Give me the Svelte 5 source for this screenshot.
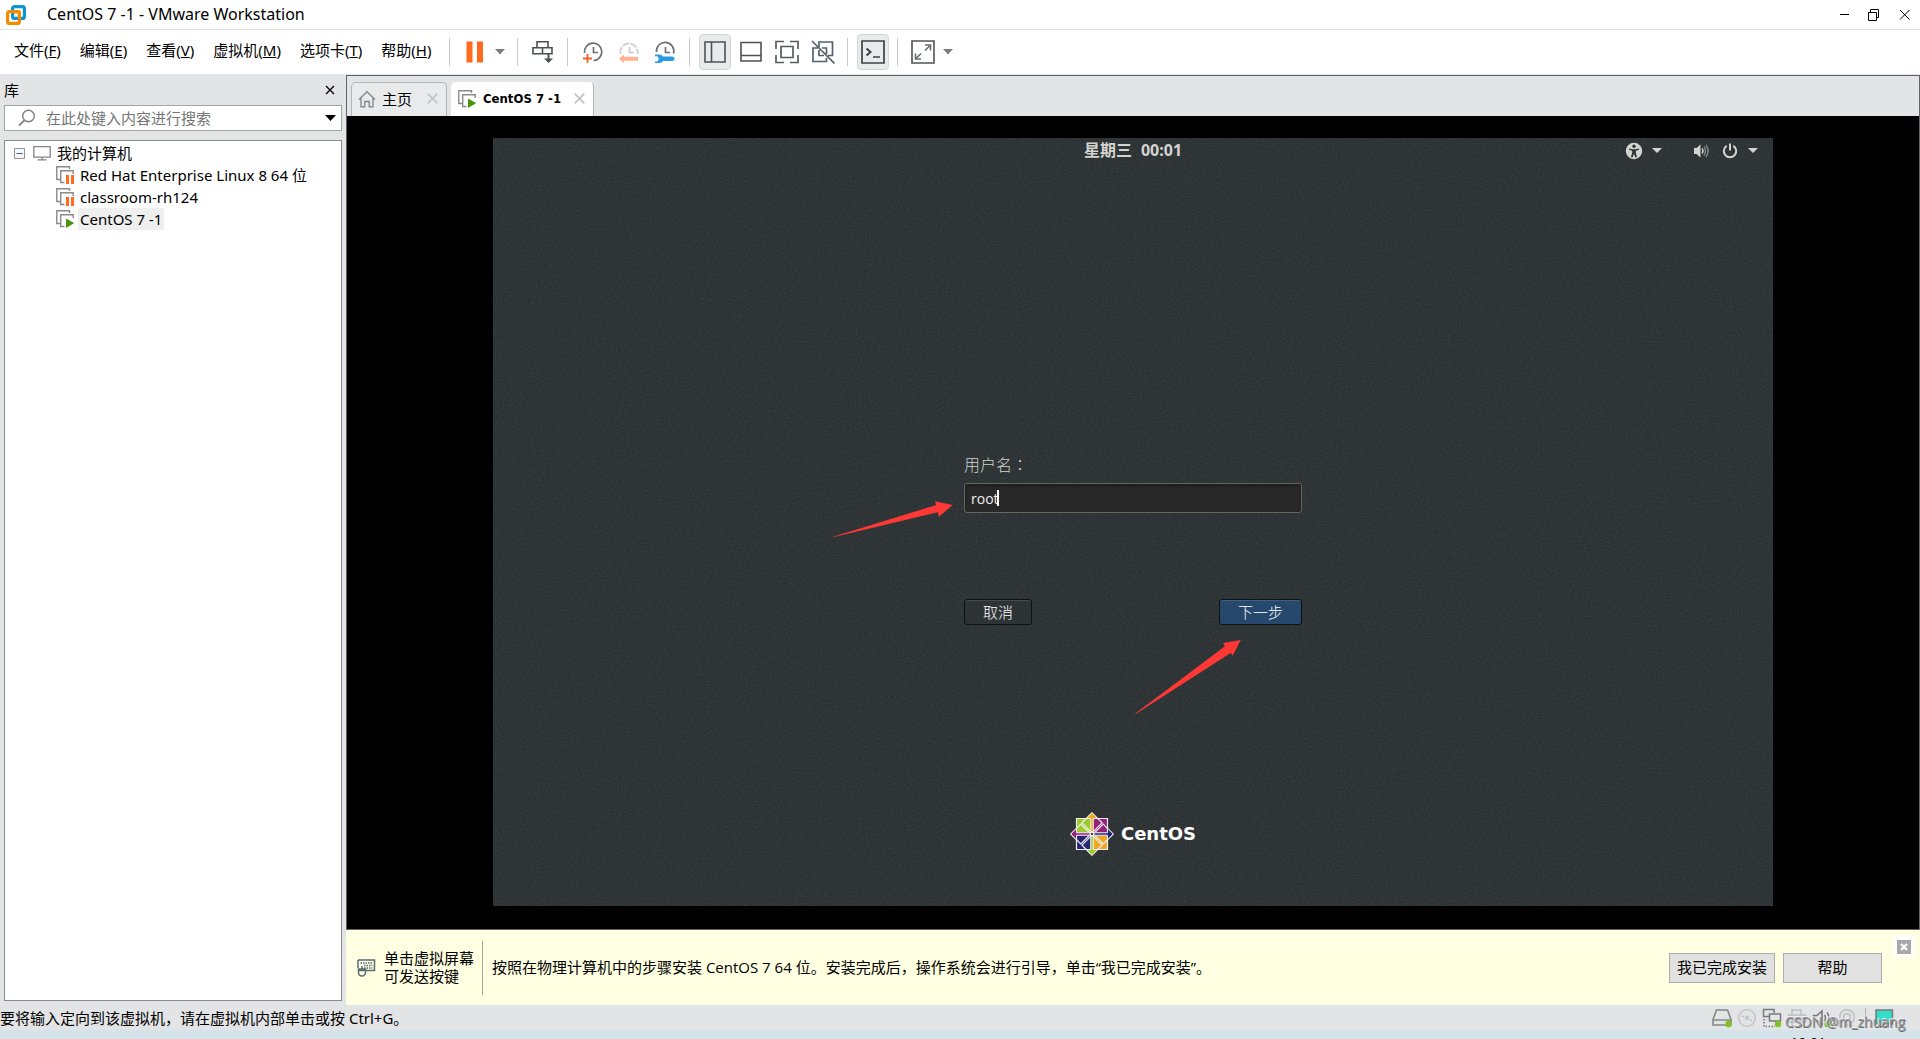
<script>
  const menus = [
    ['文件', 'F'],
    ['编辑', 'E'],
    ['查看', 'V'],
    ['虚拟机', 'M'],
    ['选项卡', 'T'],
    ['帮助', 'H']
  ];
  const machines = [
    { name: 'Red Hat Enterprise Linux 8 64 位', state: 'paused' },
    { name: 'classroom-rh124', state: 'paused' },
    { name: 'CentOS 7 -1', state: 'running', selected: true }
  ];
  let username = $state('root');
  let query = $state('');
</script>

{#snippet vm(state)}
  <svg class="i18" viewBox="0 0 18 18" fill="none">
    <path d="M4 13.5H.8V.8H13.500V3" stroke="#8a8a8a" stroke-width="1.400" />
    <path d="M8.500 16.500H4.700V4.700H17.200V8" stroke="#8a8a8a" stroke-width="1.400" />
    {#if state === 'paused'}
      <path d="M10 9h3v9h-3zM15 9h3v9h-3z" fill="#ff6a1f" />
    {:else}
      <path d="M10 8.500L18.200 13.200 10 18z" fill="#46960c" />
    {/if}
  </svg>
{/snippet}

{#snippet cross()}
  <svg class="i11" viewBox="0 0 11 11"><path d="M.7.7l9.600 9.600M10.300.7L.7 10.300" stroke="currentColor" stroke-width="1.700" /></svg>
{/snippet}

<div class="window">
  <header class="title">
    <svg class="applogo" viewBox="0 0 20 20" fill="none" stroke-width="3.200">
      <rect x="6.600" y="1.600" width="11.800" height="11.800" rx="2" stroke="#0f95d4" />
      <rect x="1.600" y="6.600" width="11.800" height="11.800" rx="2" stroke="#f38b00" />
      <path d="M6.600 9.500V12a1.500 1.500 0 0 0 1.500 1.400h3" stroke="#0f95d4" stroke-width="1.200" />
      <path d="M8.500 6.600H12a1.400 1.400 0 0 1 1.400 1.400v3.500" stroke="#f38b00" stroke-width="3.200" />
    </svg>
    <h1>CentOS 7 -1 - VMware Workstation</h1>
    <div class="winbtns">
      <button aria-label="最小化"><svg viewBox="0 0 12 12"><path d="M3 5.500h9" stroke="#000" /></svg></button>
      <button aria-label="还原"><svg viewBox="0 0 12 12" fill="none" stroke="#000"><path d="M.5 3.500h8v8h-8zM2.500 3V.5h8v8H9" /></svg></button>
      <button aria-label="关闭"><svg viewBox="0 0 12 12"><path d="M1 1l9.500 9.500M10.500 1L1 10.500" stroke="#000" /></svg></button>
    </div>
  </header>

  <div class="menubar">
    <nav>
      {#each menus as [label, key]}
        <button>{label}(<u>{key}</u>)</button>
      {/each}
    </nav>
    <div class="tools">
      <i class="sep"></i>
      <div class="split">
        <button class="tool" aria-label="暂停"><svg viewBox="0 0 24 24"><path d="M3.500 1.500h6v21h-6zM14 1.500h6v21h-6z" fill="#ff6a1f" /></svg></button>
        <button class="drop" aria-label="电源选项"><svg viewBox="0 0 10 6"><path d="M0 0h10L5 5.500z" fill="#7c7c7c" /></svg></button>
      </div>
      <i class="sep"></i>
      <button class="tool" aria-label="发送 Ctrl+Alt+Del">
        <svg viewBox="0 0 24 24" fill="none" stroke="#4d5053" stroke-width="1.600"><path d="M6 1.800h11v6H6zM2 7.800h9.500v6H2zM11.500 7.800h9.500v6h-9.500z" /><path d="M17.500 14v7" stroke-width="2" /><path d="M13 18.500h9l-4.500 4.500z" fill="#4d5053" stroke="none" /></svg>
      </button>
      <i class="sep"></i>
      <button class="tool" aria-label="拍摄快照">
        <svg viewBox="0 0 24 24" fill="none"><path d="M3.500 13A8.700 8.700 0 1 1 12.500 20.500" stroke="#6e7073" stroke-width="1.700" /><path d="M12.500 7v5.500H17" stroke="#6e7073" stroke-width="1.700" /><path d="M2 18.500h9M6.500 14v9" stroke="#f0622a" stroke-width="1.800" /></svg>
      </button>
      <button class="tool" aria-label="恢复快照">
        <svg viewBox="0 0 24 24" fill="none"><path d="M3.500 14A8.700 8.700 0 1 1 20.500 14" stroke="#c9cacb" stroke-width="1.700" stroke-dasharray="7 1.500" /><path d="M12.500 7v5.500H17" stroke="#c9cacb" stroke-width="1.700" /><path d="M2 18.700l5-4.200v2.200h14v4H7V23z" fill="#ffb08c" /></svg>
      </button>
      <button class="tool" aria-label="快照管理器">
        <svg viewBox="0 0 24 24" fill="none"><path d="M3.500 12A8.700 8.700 0 1 1 20.500 13.500" stroke="#6e7073" stroke-width="1.700" /><path d="M12.500 7v5.500H17" stroke="#6e7073" stroke-width="1.700" /><path d="M2 14.500h4.500c2 0 2.700 1 3.500 2h9c3.500 0 3.500 4.500 0 4.500h-9c-.8 1-1.500 2-3.500 2H2v-1.500h2.500l1.300-2.700-1.300-2.600H2z" fill="#2b9be0" /></svg>
      </button>
      <i class="sep"></i>
      <button class="tool on" aria-label="显示库"><svg viewBox="0 0 24 24" fill="none" stroke="#4f5254" stroke-width="1.600"><path d="M2 2h20v20H2zM8.500 2v20" /></svg></button>
      <button class="tool" aria-label="显示缩略图"><svg viewBox="0 0 24 24" fill="none" stroke="#4f5254" stroke-width="1.600"><path d="M2 2.500h20v18.500H2zM2 15.500h20" /></svg></button>
      <button class="tool" aria-label="全屏"><svg viewBox="0 0 24 24" fill="none" stroke="#5a5d60" stroke-width="1.700"><path d="M6 6.500h12v11H6zM1 9V1.500h8M15 1.500h8V9M1 15v7.500h8M15 22.500h8V15" /></svg></button>
      <button class="tool" aria-label="Unity"><svg viewBox="0 0 24 24" fill="none" stroke="#56626c" stroke-width="1.700"><path d="M8 7V2h13.500v13.500H17M8 10v5.500h5M15.500 14V8H11M7 8H2v13.500h13.500V18M1 1l22.500 22.500" /></svg></button>
      <i class="sep"></i>
      <button class="tool on" aria-label="控制台"><svg viewBox="0 0 24 24" fill="none" stroke="#3f4244" stroke-width="1.700"><path d="M1 1h22v22H1zM12 17h7" /><path d="M5.500 8.500l4 3.500-4 3.500" stroke-width="2" /></svg></button>
      <i class="sep"></i>
      <div class="split">
        <button class="tool" aria-label="拉伸"><svg viewBox="0 0 24 24" fill="none" stroke="#4f5254" stroke-width="1.600"><path d="M1 1h22v22H1z" /><path d="M14 5h5.500v5.500M19 5.500l-5 5M4.500 13.500V19H10M5 18.500l5-5" stroke="#6a6d70" /></svg></button>
        <button class="drop" aria-label="拉伸选项"><svg viewBox="0 0 10 6"><path d="M0 0h10L5 5.500z" fill="#7c7c7c" /></svg></button>
      </div>
    </div>
  </div>

  <div class="body">
    <aside>
      <div class="libhead">
        <span>库</span>
        <button aria-label="关闭库"><svg viewBox="0 0 10 10"><path d="M1 1l8 8M9 1L1 9" stroke="#000" stroke-width="1.300" /></svg></button>
      </div>
      <label class="search">
        <svg class="i18" viewBox="0 0 18 18" fill="none" stroke="#828282" stroke-width="1.400"><circle cx="10.500" cy="7" r="5.800" /><path d="M6.500 11.200L1 16.700" stroke-width="1.800" /></svg>
        <input placeholder="在此处键入内容进行搜索" bind:value={query} aria-label="搜索" />
        <svg class="arrow" viewBox="0 0 11 6"><path d="M0 0h11L5.500 6z" fill="#000" /></svg>
      </label>
      <div class="tree">
        <div class="row root">
          <svg class="i11" viewBox="0 0 11 11"><path d="M.5.5h10v10H.5z" fill="#f7f7f7" stroke="#8f9297" /><path d="M2.500 5.500h6" stroke="#3c5aa8" /></svg>
          <svg class="i18" viewBox="0 0 18 18" fill="none" stroke="#858585" stroke-width="1.300"><path d="M.8 2.700h16.400v10.500H.8zM9 13v3M4.500 15.800h9" /></svg>
          <span>我的计算机</span>
        </div>
        {#each machines as m}
          <div class="row child">
            {@render vm(m.state)}
            <span class:selected={m.selected}>{m.name}</span>
          </div>
        {/each}
      </div>
    </aside>

    <main>
      <div class="tabs">
        <div class="tab home">
          <svg class="i18" viewBox="0 0 18 18" fill="none" stroke="#888" stroke-width="1.400"><path d="M1 9.500L9 1.700l8 7.800M3 8v8.800h3.800V11.500h4.400v5.300H15V8" /></svg>
          <span>主页</span>
          <button aria-label="关闭主页">{@render cross()}</button>
        </div>
        <div class="tab active">
          {@render vm('running')}
          <strong>CentOS 7 -1</strong>
          <button aria-label="关闭 CentOS 7 -1">{@render cross()}</button>
        </div>
      </div>

      <div class="console">
        <div class="guest">
          <svg class="grain" aria-hidden="true">
            <filter id="grain"><feTurbulence type="fractalNoise" baseFrequency="0.600" numOctaves="2" /><feColorMatrix type="matrix" values="0 0 0 0 .5  0 0 0 0 .56  0 0 0 0 .58  .5 0 0 0 -.15" /></filter>
            <rect width="100%" height="100%" filter="url(#grain)" />
          </svg>
          <div class="gbar">
            <time><span>星期三</span><span>00:01</span></time>
            <div class="gicons">
              <button aria-label="辅助功能">
                <svg class="i18" viewBox="0 0 18 18"><circle cx="9" cy="9" r="8.200" fill="#d3d3d0" /><circle cx="9" cy="4.300" r="1.700" fill="#2e3436" /><path d="M4 6.400l3.500.8h3l3.500-.8v1.400l-3.200 1v2l1.200 4.200-1.500.4L9 11.800l-1.500 3.600-1.500-.4 1.200-4.200v-2L4 7.800z" fill="#2e3436" /></svg>
                <svg class="gcaret" viewBox="0 0 10 6"><path d="M0 0h10L5 5z" fill="#d3d3d0" /></svg>
              </button>
              <button aria-label="系统菜单">
                <svg class="i18" viewBox="0 0 18 18" fill="none"><path d="M2 6h2.500L8.500 2.500v13L4.500 12H2z" fill="#d3d3d0" /><path d="M10.200 6.500q1.600 2.500 0 5" stroke="#d3d3d0" stroke-width="1.500" /><path d="M12 4.500q3 4.500 0 9M14 2.800q4.200 6.200 0 12.400" stroke="#80857f" stroke-width="1.500" /></svg>
                <svg class="i18 power" viewBox="0 0 18 18" fill="none" stroke="#d3d3d0" stroke-width="2"><path d="M5.700 3.800a6.200 6.200 0 1 0 6.600 0M9 1.500v7" /></svg>
                <svg class="gcaret" viewBox="0 0 10 6"><path d="M0 0h10L5 5z" fill="#d3d3d0" /></svg>
              </button>
            </div>
          </div>

          <form onsubmit={(e) => e.preventDefault()}>
            <label for="user">用户名<span>：</span></label>
            <div class="field">
              <input id="user" bind:value={username} autocomplete="off" spellcheck="false" />
              <i class="caret"></i>
            </div>
            <div class="actions">
              <button type="button">取消</button>
              <button class="next">下一步</button>
            </div>
          </form>

          <div class="brand">
            <svg viewBox="-22 -22 44 44" stroke="#f1eef2" stroke-width="1.200">
              <path d="M-15.500-15.500H-1V-1H-15.500z" fill="#9ccd2a" />
              <path d="M1-15.500H15.500V-1H1z" fill="#932279" />
              <path d="M-15.500 1H-1V15.500H-15.500z" fill="#262577" />
              <path d="M1 1H15.500V15.500H1z" fill="#efa724" />
              <path d="M0-21.200L10-11.200 0-1.200-10-11.200z" fill="none" />
              <path d="M21.200 0L11.200 10 1.200 0 11.200-10z" fill="none" />
              <path d="M0 21.200L10 11.200 0 1.200-10 11.200z" fill="none" />
              <path d="M-21.200 0L-11.200 10-1.200 0-11.200-10z" fill="none" />
              <path d="M0-21.200L5.700-15.500H1.200V-2H-1.200V-15.500H-5.700z" fill="#efa724" stroke-width=".9" />
              <path d="M21.200 0L15.500 5.700V1.200H2V-1.200H15.500V-5.700z" fill="#262577" stroke-width=".9" />
              <path d="M0 21.200L-5.700 15.500H-1.200V2H1.200V15.500H5.700z" fill="#9ccd2a" stroke-width=".9" />
              <path d="M-21.200 0L-15.500-5.700V-1.200H-2V1.200H-15.500V5.700z" fill="#932279" stroke-width=".9" />
              <path d="M-1.500-1.500h3v3h-3z" fill="#2e3436" />
            </svg>
            <span>CentOS</span>
          </div>

          <svg class="pointers" viewBox="0 0 1280 768" fill="#fd3835" aria-hidden="true">
            <path d="M340 398.700L443.300 367 442 363.200 459.700 367 446 378.700 444.700 374.300 341 399z" />
            <path d="M642.300 575.500L732 508.300 730 505 747.700 502 739.700 517.700 737.700 515 642.700 576z" />
          </svg>
        </div>
      </div>

      <div class="notice">
        <svg class="keys" viewBox="0 0 20 20" fill="none" stroke="#5a6b78" stroke-width="1.500"><path d="M2 2h16.500v10.500H10M2 2v8" /><path d="M4.500 5h12M8 7.500h8.500M8 10h8.500" stroke-dasharray="1.500 1" /><path d="M2.500 11h7v3.500a3.500 3.500 0 0 1-7 0zM2.500 12.500h7M6 8v4.500" /></svg>
        <p class="hint">单击虚拟屏幕<br />可发送按键</p>
        <p class="msg">按照在物理计算机中的步骤安装 CentOS 7 64 位。安装完成后，操作系统会进行引导，单击“我已完成安装”。</p>
        <button class="push wide">我已完成安装</button>
        <button class="push">帮助</button>
        <button class="dismiss" aria-label="关闭提示"><svg viewBox="0 0 14 14"><path d="M0 0h14v14H0z" fill="#a8a8a8" /><path d="M4 4l6 6M10 4l-6 6" stroke="#fff" stroke-width="2.200" /></svg></button>
      </div>
    </main>
  </div>

  <footer>
    <span class="status">要将输入定向到该虚拟机，请在虚拟机内部单击或按 Ctrl+G。</span>
    <div class="devices">
      <svg viewBox="0 0 20 20" fill="none" stroke="#858789" stroke-width="1.600"><path d="M4.500 2h11l3.500 9.500v5.500H1v-5.500zM1 12h18" /><circle cx="16.500" cy="16" r="3.200" fill="#7cc51e" stroke="none" /></svg>
      <svg viewBox="0 0 20 20" fill="none" stroke="#bcbec0" stroke-width="1.300"><circle cx="10" cy="10" r="8.300" /><circle cx="10" cy="10" r="1.500" /><path d="M5 7.500L7 9M13 11.500l2 1.500" /></svg>
      <svg viewBox="0 0 20 20" fill="none" stroke="#77797b" stroke-width="1.500"><path d="M7 8.500H1.500v-7H12V5M7.500 6h11v7h-11zM14 13v2" /><path d="M2 11v7.500h11" stroke-dasharray="1.500 1.500" /><circle cx="16" cy="16" r="3.200" fill="#7cc51e" stroke="none" /></svg>
      <svg viewBox="0 0 20 20" fill="none" stroke="#bcbec0" stroke-width="1.500"><path d="M5 7V2h9v5M1.500 7h17v7h-17zM5 12h10v6H5z" /></svg>
      <svg viewBox="0 0 20 20" fill="none" stroke="#77797b" stroke-width="1.500"><path d="M1.500 7.500h3.500L10 3v14l-5-4.500H1.500zM12.500 7q2 3 0 6M15 4.500q4 5.500 0 11" /><circle cx="15.500" cy="16" r="3.200" fill="#7cc51e" stroke="none" /></svg>
      <svg viewBox="0 0 20 20" fill="none" stroke="#bcbec0" stroke-width="1.400"><circle cx="10" cy="9" r="7.300" /><circle cx="10" cy="9" r="3.300" /><path d="M4 17.500h12" /></svg>
      <i class="vline"></i>
      <svg viewBox="0 0 20 20"><path d="M2 2h16.500v14H2z" fill="#35dcc8" stroke="#77797b" stroke-width="1.500" /><path d="M6 18.500h8" stroke="#77797b" stroke-width="1.500" /></svg>
    </div>
    <span class="mark">CSDN @m_zhuang</span>
  </footer>
  <div class="taskbar"><time>19:01</time></div>
</div>

<style>
  :global(body) {
    margin: 0;
  }
  .window {
    display: flex;
    flex-direction: column;
    min-height: 100vh;
    box-sizing: border-box;
    background: #e3e4e6;
    color: #000;
    font: 15px/22px 'Noto Sans', 'Noto Sans CJK SC', sans-serif;
  }
  button {
    margin: 0;
    padding: 0;
    border: 0;
    background: none;
    color: inherit;
    font: inherit;
    display: flex;
    align-items: center;
    justify-content: center;
  }
  svg {
    display: block;
    flex: none;
  }
  p,
  h1 {
    margin: 0;
    font: inherit;
  }
  .i18 {
    width: 18px;
    height: 18px;
  }
  .i11 {
    width: 11px;
    height: 11px;
  }

  .title {
    display: flex;
    align-items: center;
    height: 29px;
    padding-left: 6px;
    background: #fff;
    border-bottom: 1px solid #e1e1e1;
  }
  .title h1 {
    padding-bottom: 2px;
    font-size: 16px;
  }
  .applogo {
    width: 20px;
    height: 20px;
    margin-right: 21px;
  }
  .winbtns {
    display: flex;
    gap: 19px;
    margin-left: auto;
    padding-right: 9px;
  }
  .winbtns svg {
    width: 12px;
    height: 12px;
  }

  .menubar {
    display: flex;
    align-items: center;
    height: 44px;
    background: #fff;
  }
  nav {
    display: flex;
    gap: 19px;
    box-sizing: border-box;
    min-width: 445px;
    padding: 0 0 4px 14px;
  }
  nav button {
    display: block;
    white-space: nowrap;
  }
  .tools {
    display: flex;
    align-items: center;
    gap: 4px;
    padding-bottom: 1px;
  }
  .sep {
    width: 1px;
    height: 28px;
    margin: 0 5px 0 4px;
    background: #c8c8c8;
  }
  .split {
    display: flex;
  }
  .tool {
    box-sizing: border-box;
    width: 32px;
    height: 36px;
    border: 1px solid transparent;
    border-radius: 4px;
  }
  .tool svg {
    width: 24px;
    height: 24px;
  }
  .tool.on {
    background: #e9eaec;
    border-color: #d5d6d8;
  }
  .drop {
    width: 18px;
  }
  .drop svg {
    width: 10px;
    height: 6px;
  }

  .body {
    display: flex;
    flex: 1;
  }
  aside {
    display: flex;
    flex-direction: column;
    flex: none;
    box-sizing: border-box;
    width: 346px;
    padding: 0 4px 4px;
  }
  .libhead {
    display: flex;
    align-items: center;
    justify-content: space-between;
    height: 31px;
    padding-right: 7px;
  }
  .libhead svg {
    width: 10px;
    height: 10px;
  }
  .search {
    display: flex;
    align-items: center;
    box-sizing: border-box;
    height: 26px;
    padding: 0 5px 0 13px;
    background: #fff;
    border: 1px solid #a3a5a9;
  }
  .search input {
    flex: 1;
    min-width: 0;
    padding: 0 0 0 10px;
    border: 0;
    outline: 0;
    background: none;
    font: inherit;
  }
  .search input::placeholder {
    color: #757575;
    opacity: 1;
  }
  .arrow {
    width: 11px;
    height: 6px;
  }
  .tree {
    flex: 1;
    margin-top: 9px;
    padding-top: 1px;
    background: #fff;
    border: 1px solid #868a91;
  }
  .row {
    display: flex;
    align-items: center;
    height: 22px;
  }
  .root {
    gap: 8px;
    padding-left: 9px;
  }
  .root span {
    margin-left: -2px;
  }
  .child {
    gap: 4px;
    padding-left: 51px;
  }
  .child span {
    padding: 0 2px;
    white-space: nowrap;
  }
  .selected {
    background: #efefef;
  }

  main {
    display: flex;
    flex-direction: column;
    flex: 1;
    min-width: 0;
    margin-top: 1px;
  }
  .tabs {
    display: flex;
    align-items: flex-end;
    gap: 4px;
    height: 40px;
    padding-left: 4px;
    border: solid #636366;
    border-width: 1px 1px 0;
  }
  .tab {
    display: flex;
    align-items: center;
    box-sizing: border-box;
    height: 34px;
    padding: 0 8px 2px 6px;
    border: 1px solid #b4b5b7;
    border-bottom: 0;
    border-radius: 5px 5px 0 0;
    background: #e9eaec;
    color: #000;
  }
  .tab > span,
  .tab > strong {
    margin: 0 15px 0 6px;
  }
  .tab.active {
    background: #fff;
    border-color: #fff #b4b5b7 #fff #fff;
  }
  .tab strong {
    margin: 0 13px 0 7px;
    font: bold 13px/20px 'DejaVu Sans Condensed', 'DejaVu Sans', sans-serif;
  }
  .tab button {
    color: #c3c3c3;
  }
  .console {
    display: flex;
    flex: 1;
    align-items: center;
    justify-content: center;
    padding-bottom: 2px;
    background: #000;
    border: solid #636366;
    border-width: 0 1px 1px;
  }
  .guest {
    position: relative;
    display: flex;
    flex-direction: column;
    align-items: center;
    width: 100%;
    max-width: 1280px;
    aspect-ratio: 5 / 3;
    background: #2b3133;
    color: #d3d3d0;
  }
  .grain,
  .pointers {
    position: absolute;
    inset: 0;
    width: 100%;
    height: 100%;
    pointer-events: none;
  }
  .grain {
    opacity: 0.3;
  }
  .gbar {
    position: relative;
    display: grid;
    grid-template-columns: 1fr auto 1fr;
    align-items: center;
    align-self: stretch;
    height: 26px;
    padding: 0 15px;
  }
  .gbar time {
    grid-column: 2;
    display: flex;
    gap: 9px;
    padding-bottom: 2px;
    font-size: 16px;
    font-weight: bold;
  }
  .gicons {
    display: flex;
    justify-content: flex-end;
    gap: 30px;
  }
  .gcaret {
    width: 10px;
    height: 6px;
    margin-left: 9px;
  }
  .power {
    margin-left: 11px;
  }
  form {
    position: relative;
    display: flex;
    flex-direction: column;
    width: 338px;
    margin: auto 0;
    padding-top: 102px;
  }
  form label {
    margin-bottom: 6px;
    color: #cfd2cb;
    font-size: 16px;
    font-weight: 300;
    line-height: 24px;
  }
  form label span {
    font-family: 'Noto Sans CJK TC', sans-serif;
  }
  .field {
    position: relative;
    display: flex;
  }
  .field input {
    box-sizing: border-box;
    width: 100%;
    height: 30px;
    padding: 0 6px;
    border: 1px solid #66665f;
    border-radius: 3px;
    outline: 0;
    background: #282828;
    box-shadow: inset 0 2px 3px #1c1c1c;
    color: #eeeeec;
    font: 14px/20px 'Open Sans', sans-serif;
  }
  .caret {
    position: absolute;
    left: 33px;
    top: 7px;
    width: 2px;
    height: 16px;
    background: #fff;
  }
  .actions {
    display: flex;
    justify-content: space-between;
    margin-top: 86px;
  }
  .actions button {
    box-sizing: border-box;
    height: 26px;
    padding: 0 18px 1px;
    border: 1px solid #0f1112;
    border-radius: 3px;
    background: #2e3436;
    box-shadow: inset 0 1px #454c4f;
    color: #fff;
    font-weight: 300;
  }
  .actions .next {
    background: #26486d;
    box-shadow: inset 0 1px #40607f;
  }
  .brand {
    position: relative;
    display: flex;
    align-items: center;
    gap: 7px;
    height: 44px;
    margin-bottom: 50px;
    color: #fff;
    font: bold 18px/28px 'DejaVu Sans', sans-serif;
  }
  .brand svg {
    width: 44px;
    height: 44px;
  }

  .notice {
    position: relative;
    display: flex;
    align-items: center;
    box-sizing: border-box;
    height: 75px;
    padding: 0 38px 0 10px;
    background: #ffffe1;
  }
  .keys {
    width: 20px;
    height: 20px;
  }
  .hint {
    margin-left: 8px;
    padding: 8px 8px 10px 0;
    border-right: 1px solid #a5a5a0;
    line-height: 18px;
    white-space: nowrap;
  }
  .msg {
    flex: 1;
    padding: 0 9px 2px;
    font-family: 'Open Sans', 'Noto Sans CJK SC', sans-serif;
  }
  .push {
    box-sizing: border-box;
    width: 99px;
    height: 30px;
    margin-left: 8px;
    padding-bottom: 2px;
    border: 1px solid #adadad;
    background: #e1e1e1;
    white-space: nowrap;
  }
  .push.wide {
    width: 106px;
  }
  .dismiss {
    position: absolute;
    top: 6px;
    right: 6px;
    width: 20px;
    height: 21px;
    background: #fff;
  }
  .dismiss svg {
    width: 14px;
    height: 14px;
  }

  footer {
    position: relative;
    display: flex;
    align-items: center;
    justify-content: space-between;
    height: 25px;
  }
  .devices {
    display: flex;
    align-items: center;
    gap: 5px;
    padding-right: 26px;
  }
  .devices svg {
    width: 20px;
    height: 20px;
  }
  .vline {
    width: 1px;
    height: 20px;
    margin: 0 3px;
    background: #b4b4b4;
  }
  .mark {
    position: absolute;
    right: 15px;
    bottom: -2px;
    color: #9a9c9e;
    text-shadow:
      1px 1px #6f7173,
      -1px -1px #f2f3f4;
    font: 14px/20px 'Open Sans', sans-serif;
  }
  .taskbar {
    height: 9px;
    overflow: hidden;
    background: #d5e4eb;
    text-align: right;
  }
  .taskbar time {
    display: block;
    padding: 4px 94px 0 0;
    font-size: 14px;
    line-height: 18px;
  }
</style>
